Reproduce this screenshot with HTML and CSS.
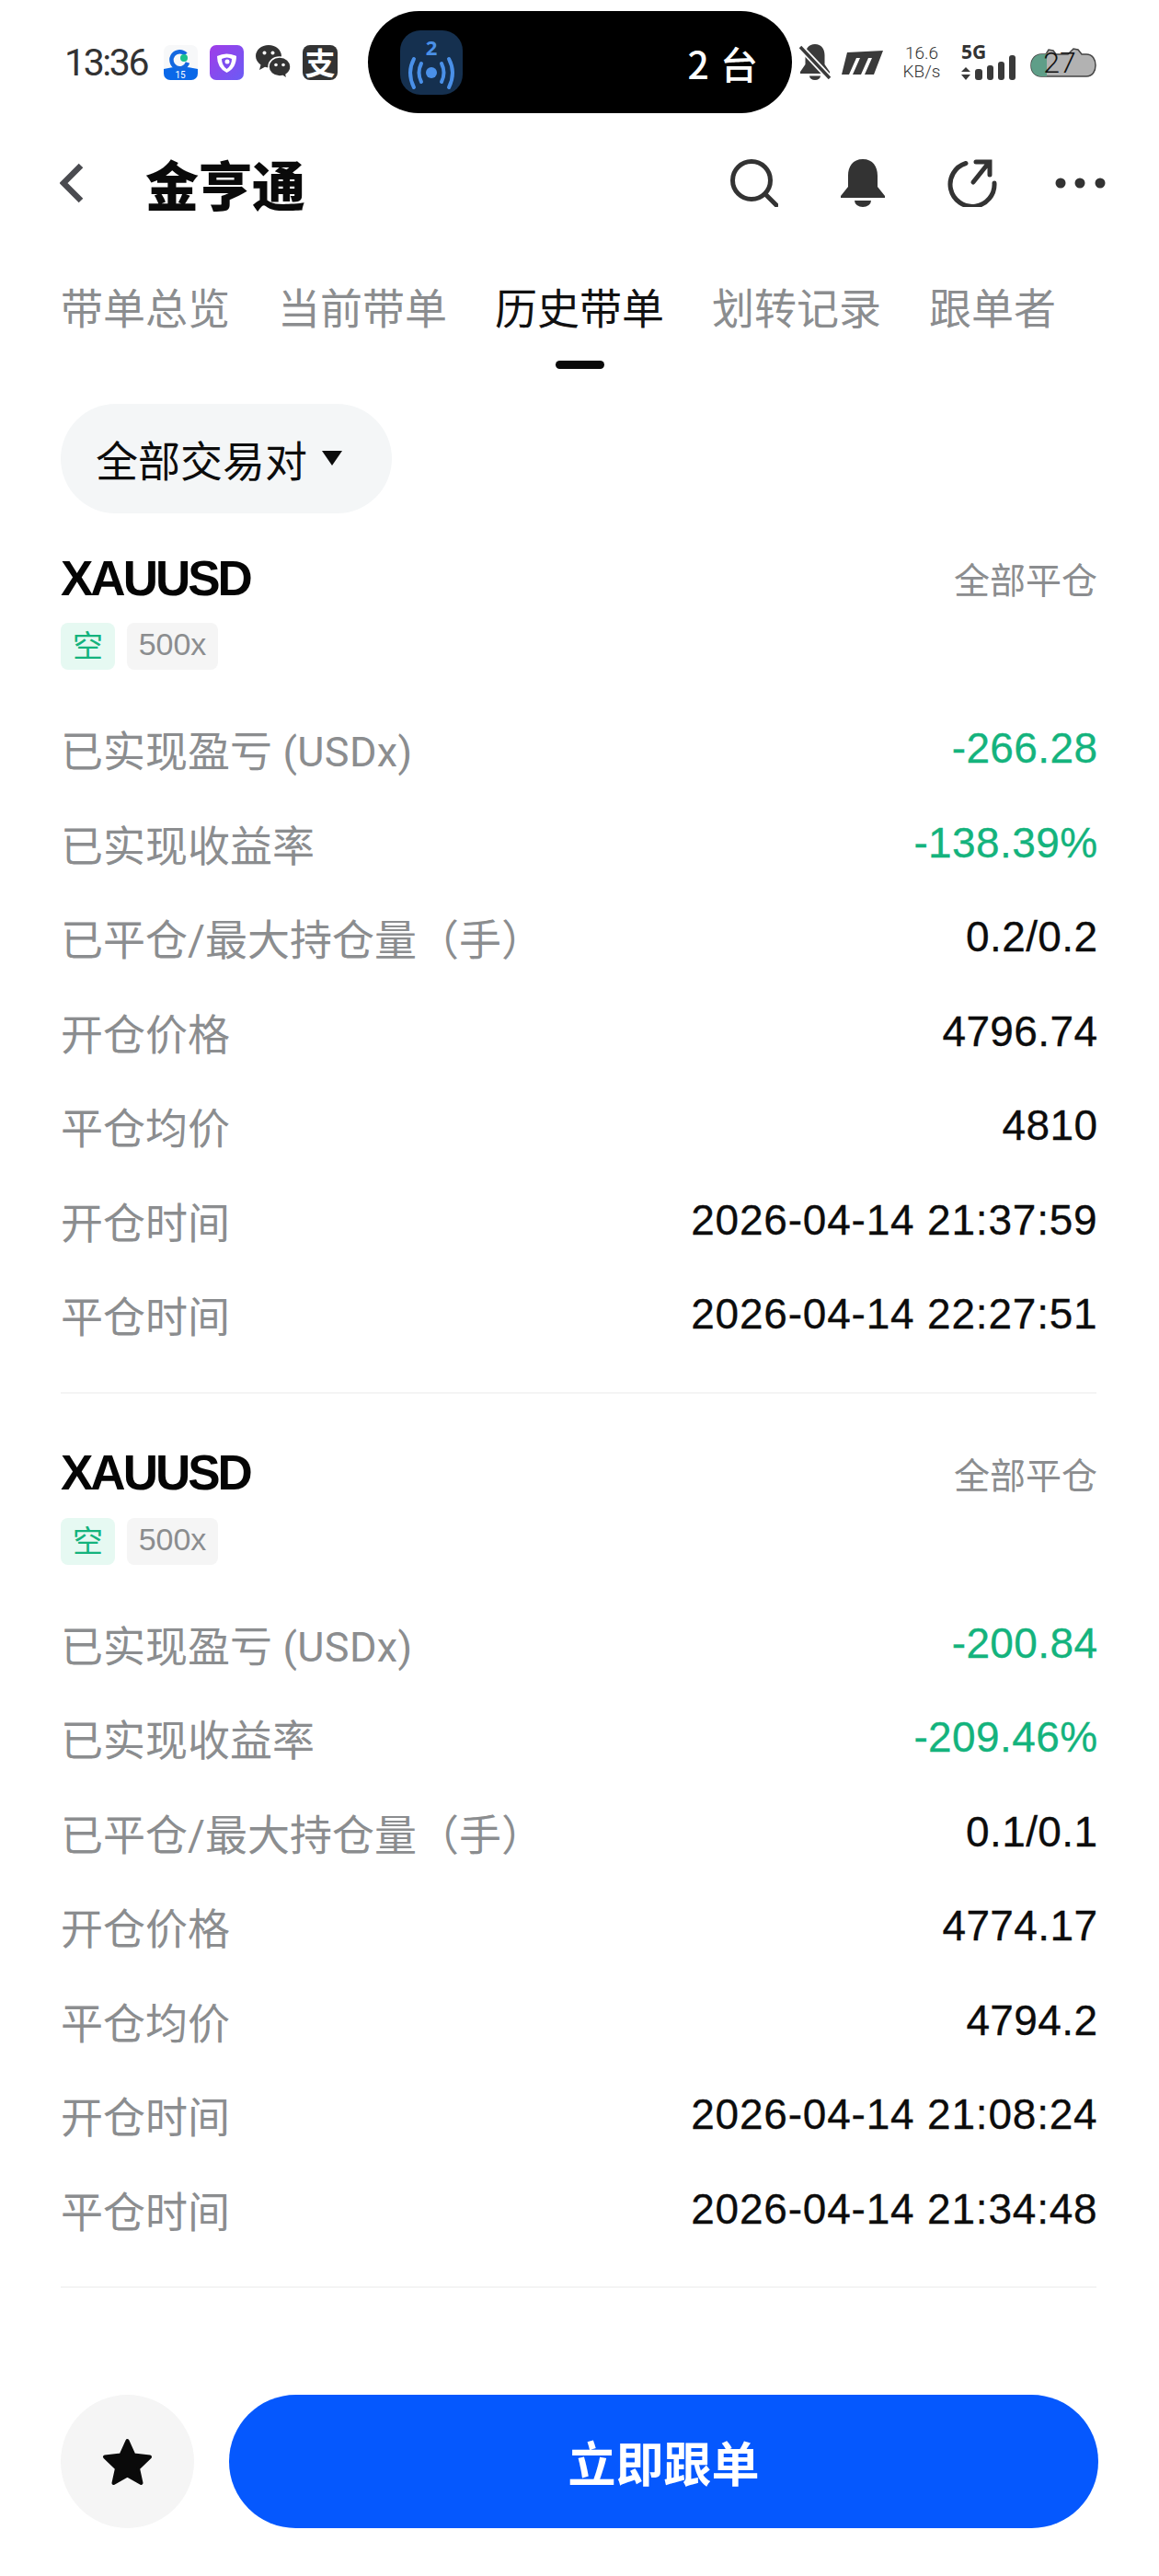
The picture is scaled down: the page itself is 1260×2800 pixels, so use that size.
FILE: index.html
```html
<!DOCTYPE html>
<html lang="zh-CN">
<head>
    <meta charset="UTF-8">
    <title>金亨通</title>
    <link rel="stylesheet" href="styles.css">
</head>
<body>
    <div class="status-bar">
        <span class="time">13:36</span>
        <div class="app-icons">
            <svg width="37" height="38" viewBox="0 0 37 38">
                <rect width="37" height="38" rx="7" fill="#f7f8f9"/>
                <path d="M0 26q18 -5 37 0v5a7 7 0 0 1-7 7H7a7 7 0 0 1-7-7z" fill="#0a68e8"/>
                <path d="M24 10a9 9 0 1 0 2 9" fill="none" stroke="#1468e0" stroke-width="4.5"/>
                <circle cx="22" cy="14" r="4" fill="#19c08c"/>
                <text x="18" y="36" class="mini-num">15</text>
            </svg>
            <svg width="37" height="38" viewBox="0 0 37 38">
                <defs>
                    <linearGradient id="purple" x1="0" y1="0" x2="1" y2="1">
                        <stop offset="0" stop-color="#a03ce8"/>
                        <stop offset="1" stop-color="#6a5cf5"/>
                    </linearGradient>
                </defs>
                <rect width="37" height="38" rx="7" fill="url(#purple)"/>
                <path d="M8 12q10 -5 21 0q0 13 -10.500 18q-10.500 -5 -10.500 -18z" fill="#fff"/>
                <path d="M13 15q6 -3 11 0q0 7 -5.500 11q-5.500 -4 -5.500 -11z" fill="#7d4cf0"/>
                <circle cx="19" cy="18" r="2.500" fill="#fff"/>
            </svg>
            <svg width="38" height="37" viewBox="0 0 38 37">
                <path d="M14 0C6 0 0 5.500 0 12c0 4 2.200 7 5.500 9.500L4 27l6-3.200c1.500.4 2.500.6 4 .6 6 0 14-6 14-12.400C28 5.500 22 0 14 0z" fill="#333"/>
                <path d="M26 13c-7 0-12 4.800-12 10.500S19 34 26 34c1.500 0 2.500-.2 3.500-.5L34 36.500l-1-4.500c3-2 5-5 5-8.500C38 17.800 33 13 26 13z" fill="#333" stroke="#fff" stroke-width="1.500"/>
                <circle cx="9.500" cy="8.500" r="2" fill="#fff"/>
                <circle cx="18.500" cy="8.500" r="2" fill="#fff"/>
                <circle cx="22" cy="21.500" r="1.800" fill="#fff"/>
                <circle cx="30" cy="21.500" r="1.800" fill="#fff"/>
            </svg>
            <span class="alipay">支</span>
        </div>
        <div class="island">
            <svg width="68" height="70" viewBox="0 0 68 70">
                <rect width="68" height="70" rx="22" fill="#15304f"/>
                <text x="34" y="27" class="island-num">2</text>
                <circle cx="34" cy="46" r="6" fill="#4a90e8"/>
                <g fill="none" stroke="#4a90e8" stroke-width="4" stroke-linecap="round">
                    <path d="M23 36q-5 10 0 20"/>
                    <path d="M45 36q5 10 0 20"/>
                    <path d="M15 31q-8 15 0 31"/>
                    <path d="M53 31q8 15 0 31"/>
                </g>
            </svg>
            <span class="island-text">2 台</span>
        </div>
        <div class="sys-icons">
            <svg width="36" height="39" viewBox="0 0 36 39">
                <path d="M18 0c-7 0-10.500 5-10.500 12v10L2 30v2h32v-2l-5.500-8V12C28.500 5 25 0 18 0z" fill="#3a3a3a"/>
                <path d="M12 34.500h12a6 4.500 0 0 1-12 0z" fill="#3a3a3a"/>
                <path d="M2 3l32 34" stroke="#fff" stroke-width="7"/>
                <path d="M2 3l32 34" stroke="#3a3a3a" stroke-width="3.500"/>
            </svg>
            <svg class="brand-m" width="45" height="26" viewBox="0 0 45 26">
                <path d="M6 2L45 0 35 26H25l8-18h-4L21 26H12l8-18h-4L8 26H0z" fill="#3a3a3a"/>
            </svg>
            <div class="speed"><span>16.6</span><span>KB/s</span></div>
            <svg class="signal" width="59" height="38" viewBox="0 0 59 38">
                <text x="0" y="15" class="five-g">5G</text>
                <path d="M5 24l5 5H0zM5 38l5-6H0z" fill="#3a3a3a"/>
                <rect x="15" y="26" width="8" height="12" rx="3" fill="#3a3a3a"/>
                <rect x="28" y="22" width="7" height="16" rx="3" fill="#3a3a3a"/>
                <rect x="40" y="18" width="7" height="20" rx="3" fill="#3a3a3a"/>
                <rect x="52" y="11" width="7" height="27" rx="3" fill="#3a3a3a"/>
            </svg>
            <svg class="battery" width="72" height="32" viewBox="0 0 72 32">
                <defs>
                    <clipPath id="charge"><rect width="18" height="32"/></clipPath>
                </defs>
                <path d="M12 31C5 31 1 26 1 19S6 7 12 7h5l3-5 5 1 3 4h13l6-6 5 1 4 5h5c7 0 10 6 10 12s-3 12-10 12z" fill="#b2b2b2" stroke="#444" stroke-width="1.500"/>
                <path d="M12 31C5 31 1 26 1 19S6 7 12 7h5l3-5 5 1 3 4h13l6-6 5 1 4 5h5c7 0 10 6 10 12s-3 12-10 12z" fill="#5f9e88" clip-path="url(#charge)"/>
                <text x="32" y="27" class="battery-num">27</text>
            </svg>
        </div>
    </div>

    <div class="header">
        <svg class="back" width="26" height="44" viewBox="0 0 26 44">
            <path d="M23 3L4 22l19 19" fill="none" stroke="#4a4b50" stroke-width="6.500"/>
        </svg>
        <h1 class="title">金亨通</h1>
        <div class="head-icons">
            <svg width="52" height="52" viewBox="0 0 52 52">
                <circle cx="23" cy="23" r="20.500" fill="none" stroke="#333" stroke-width="5"/>
                <path d="M38 38l12 12" stroke="#333" stroke-width="5" stroke-linecap="round"/>
            </svg>
            <svg width="48" height="52" viewBox="0 0 48 52">
                <path d="M24 0C13 0 8 8 8 18v12L0 40v2h48v-2l-8-10V18C40 8 35 0 24 0z" fill="#333"/>
                <path d="M15 45h18a9 7 0 0 1-18 0z" fill="#333"/>
            </svg>
            <svg width="54" height="52" viewBox="0 0 54 52">
                <path d="M20 4.500A24 24 0 1 0 51 26" fill="none" stroke="#333" stroke-width="5" stroke-linecap="round"/>
                <path d="M28 25L44 5M31 3h15v14" fill="none" stroke="#333" stroke-width="5" stroke-linecap="round"/>
            </svg>
            <svg class="dots" width="60" height="12" viewBox="0 0 60 12">
                <circle cx="11" cy="6" r="5.500" fill="#333"/>
                <circle cx="32" cy="6" r="5.500" fill="#333"/>
                <circle cx="54" cy="6" r="5.500" fill="#333"/>
            </svg>
        </div>
    </div>

    <div class="tabs">
        <div class="tab">带单总览</div>
        <div class="tab">当前带单</div>
        <div class="tab active">历史带单</div>
        <div class="tab">划转记录</div>
        <div class="tab">跟单者</div>
    </div>

    <div class="content">
        <div class="filter">全部交易对<span class="caret"></span></div>

        <div class="order">
            <div class="order-head">
                <span class="symbol">XAUUSD</span>
                <span class="close-type">全部平仓</span>
            </div>
            <div class="tags">
                <span class="tag tag-short">空</span>
                <span class="tag tag-lev">500x</span>
            </div>
            <div class="rows">
                <div class="row"><span class="label">已实现盈亏 <span class="unit">(USDx)</span></span><span class="value down">-266.28</span></div>
                <div class="row"><span class="label">已实现收益率</span><span class="value down">-138.39%</span></div>
                <div class="row"><span class="label">已平仓/最大持仓量（手）</span><span class="value">0.2/0.2</span></div>
                <div class="row"><span class="label">开仓价格</span><span class="value">4796.74</span></div>
                <div class="row"><span class="label">平仓均价</span><span class="value">4810</span></div>
                <div class="row"><span class="label">开仓时间</span><span class="value date">2026-04-14 21:37:59</span></div>
                <div class="row"><span class="label">平仓时间</span><span class="value date">2026-04-14 22:27:51</span></div>
            </div>
        </div>

        <div class="order">
            <div class="order-head">
                <span class="symbol">XAUUSD</span>
                <span class="close-type">全部平仓</span>
            </div>
            <div class="tags">
                <span class="tag tag-short">空</span>
                <span class="tag tag-lev">500x</span>
            </div>
            <div class="rows">
                <div class="row"><span class="label">已实现盈亏 <span class="unit">(USDx)</span></span><span class="value down">-200.84</span></div>
                <div class="row"><span class="label">已实现收益率</span><span class="value down">-209.46%</span></div>
                <div class="row"><span class="label">已平仓/最大持仓量（手）</span><span class="value">0.1/0.1</span></div>
                <div class="row"><span class="label">开仓价格</span><span class="value">4774.17</span></div>
                <div class="row"><span class="label">平仓均价</span><span class="value">4794.2</span></div>
                <div class="row"><span class="label">开仓时间</span><span class="value date">2026-04-14 21:08:24</span></div>
                <div class="row"><span class="label">平仓时间</span><span class="value date">2026-04-14 21:34:48</span></div>
            </div>
        </div>
    </div>

    <div class="footer">
        <div class="fav">
            <svg width="57" height="52" viewBox="0 0 57 52">
                <path d="M28.500 3l7 15.500 17.500 2-13 12.500 3.500 16-15-8.500-15 8.500 3.500-16L4 20.500l17.500-2z" fill="#0a0a0a" stroke="#0a0a0a" stroke-width="4" stroke-linejoin="round"/>
            </svg>
        </div>
        <button class="follow-button">立即跟单</button>
    </div>
</body>
</html>
```

FILE: styles.css
```css
* { box-sizing: border-box; }
html, body { margin: 0; padding: 0; }
body {
    width: 1260px;
    height: 2800px;
    display: flex;
    flex-direction: column;
    background: #fff;
    color: #0c0c0c;
    font-family: "Liberation Sans", "Noto Sans CJK SC", sans-serif;
}

/* status bar */
.status-bar { display: flex; align-items: center; height: 111px; margin-top: 12px; padding-left: 70px; }
.time { width: 108px; font-family: Roboto, sans-serif; font-weight: 400; font-size: 41px; letter-spacing: -2.4px; color: #333; }
.app-icons { display: flex; align-items: center; gap: 13px; width: 222px; }
.mini-num { font-family: Roboto, sans-serif; font-size: 10px; fill: #fff; text-anchor: middle; }
.alipay {
    width: 38px;
    height: 38px;
    border-radius: 8px;
    background: #333;
    color: #fff;
    font-family: "Noto Sans CJK SC", sans-serif;
    font-weight: 700;
    font-size: 33px;
    line-height: 37px;
    text-align: center;
}
.island {
    display: flex;
    align-items: center;
    justify-content: space-between;
    width: 461px;
    height: 111px;
    padding: 0 37px 0 35px;
    border-radius: 56px;
    background: #000;
}
.island-num { font-family: "Noto Sans", sans-serif; font-weight: 700; font-size: 22px; fill: #4a90e8; text-anchor: middle; }
.island-text { font-family: "Noto Sans CJK SC", sans-serif; font-weight: 500; font-size: 41px; word-spacing: 3px; color: #fff; }
.sys-icons { display: flex; align-items: center; margin-left: 7px; }
.brand-m { margin-left: 11px; }
.speed { display: flex; flex-direction: column; align-items: center; width: 38px; margin-left: 23px; font-family: Roboto, sans-serif; font-weight: 300; font-size: 19px; line-height: 20px; color: #333; white-space: nowrap; }
.signal { margin-left: 24px; overflow: visible; }
.five-g { font-family: "Noto Sans", sans-serif; font-weight: 700; font-size: 21px; fill: #333; }
.battery { margin-left: 16px; overflow: visible; }
.battery-num { font-family: Roboto, sans-serif; font-weight: 300; font-size: 32px; fill: #111; text-anchor: middle; }

/* title row */
.header { display: flex; align-items: center; height: 152px; padding-left: 65px; padding-right: 58px; }
.title { flex: 1; margin: 0 0 0 67px; font-family: "Noto Sans CJK SC", sans-serif; font-weight: 900; font-size: 58px; color: #0a0a0a; }
.head-icons { display: flex; align-items: center; gap: 68px; }
.dots { margin-left: -10px; }

/* tabs */
.tabs { display: flex; gap: 52px; padding-left: 66px; padding-top: 27px; height: 126px; }
.tab {
    height: 99px;
    font-family: "Noto Sans CJK SC", sans-serif;
    font-size: 46px;
    line-height: 60px;
    color: #8b8d8f;
    white-space: nowrap;
}
.tab.active { position: relative; color: #111; }
.tab.active::after {
    content: "";
    position: absolute;
    left: 66px;
    bottom: 0;
    width: 53px;
    height: 9px;
    border-radius: 5px;
    background: #0a0a0a;
}

/* list */
.content { flex: 1; padding: 38px 68px 0 66px; }
.filter {
    display: inline-flex;
    align-items: center;
    height: 119px;
    width: 360px;
    padding: 0 0 2px 38px;
    border-radius: 60px;
    background: #f4f6f7;
    font-family: "Noto Sans CJK SC", sans-serif;
    font-size: 46px;
    color: #0c0c0c;
}
.caret { margin-left: 16px; border-top: 16px solid #0c0c0c; border-left: 11px solid transparent; border-right: 11px solid transparent; }

.order { margin-top: 40px; padding-bottom: 33px; border-bottom: 2px solid #f4f4f4; }
.order + .order { margin-top: 56px; }
.order-head { display: flex; justify-content: space-between; align-items: center; height: 60px; }
.symbol { font-weight: 700; font-size: 53px; letter-spacing: -3px; color: #050505; }
.close-type { margin-right: -1px; font-family: "Noto Sans CJK SC", sans-serif; font-size: 39px; color: #8b8d8f; }
.tags { display: flex; gap: 13px; margin-top: 19px; }
.tag { height: 51px; line-height: 47px; border-radius: 8px; text-align: center; }
.tag-short { width: 59px; background: #e6f9f2; color: #14b37d; font-family: "Noto Sans CJK SC", sans-serif; font-size: 33px; }
.tag-lev { width: 99px; background: #f5f5f5; color: #8b8d8f; font-size: 34px; }
.rows { margin-top: 34px; }
.row { display: flex; justify-content: space-between; align-items: center; height: 102.5px; }
.label { font-family: Roboto, "Noto Sans CJK SC", sans-serif; font-size: 46px; color: #8b8d8f; }
.unit { font-size: 45px; font-weight: 400; letter-spacing: 0.4px; }
.value { margin-right: -1.5px; font-size: 46px; letter-spacing: 0.4px; -webkit-text-stroke: 0.3px currentColor; color: #0c0c0c; }
.value.down { color: #14b37d; }
.value.date { letter-spacing: 0.8px; }

/* bottom bar */
.footer { display: flex; align-items: center; gap: 38px; height: 197px; padding: 0 66px 52px; }
.fav { display: flex; align-items: center; justify-content: center; width: 145px; height: 145px; border-radius: 50%; background: #f5f5f5; flex: none; }
.follow-button {
    flex: 1;
    height: 145px;
    border: none;
    border-radius: 73px;
    background: #0558fe;
    color: #fff;
    font-family: "Noto Sans CJK SC", sans-serif;
    font-weight: 700;
    font-size: 52px;
}
```
